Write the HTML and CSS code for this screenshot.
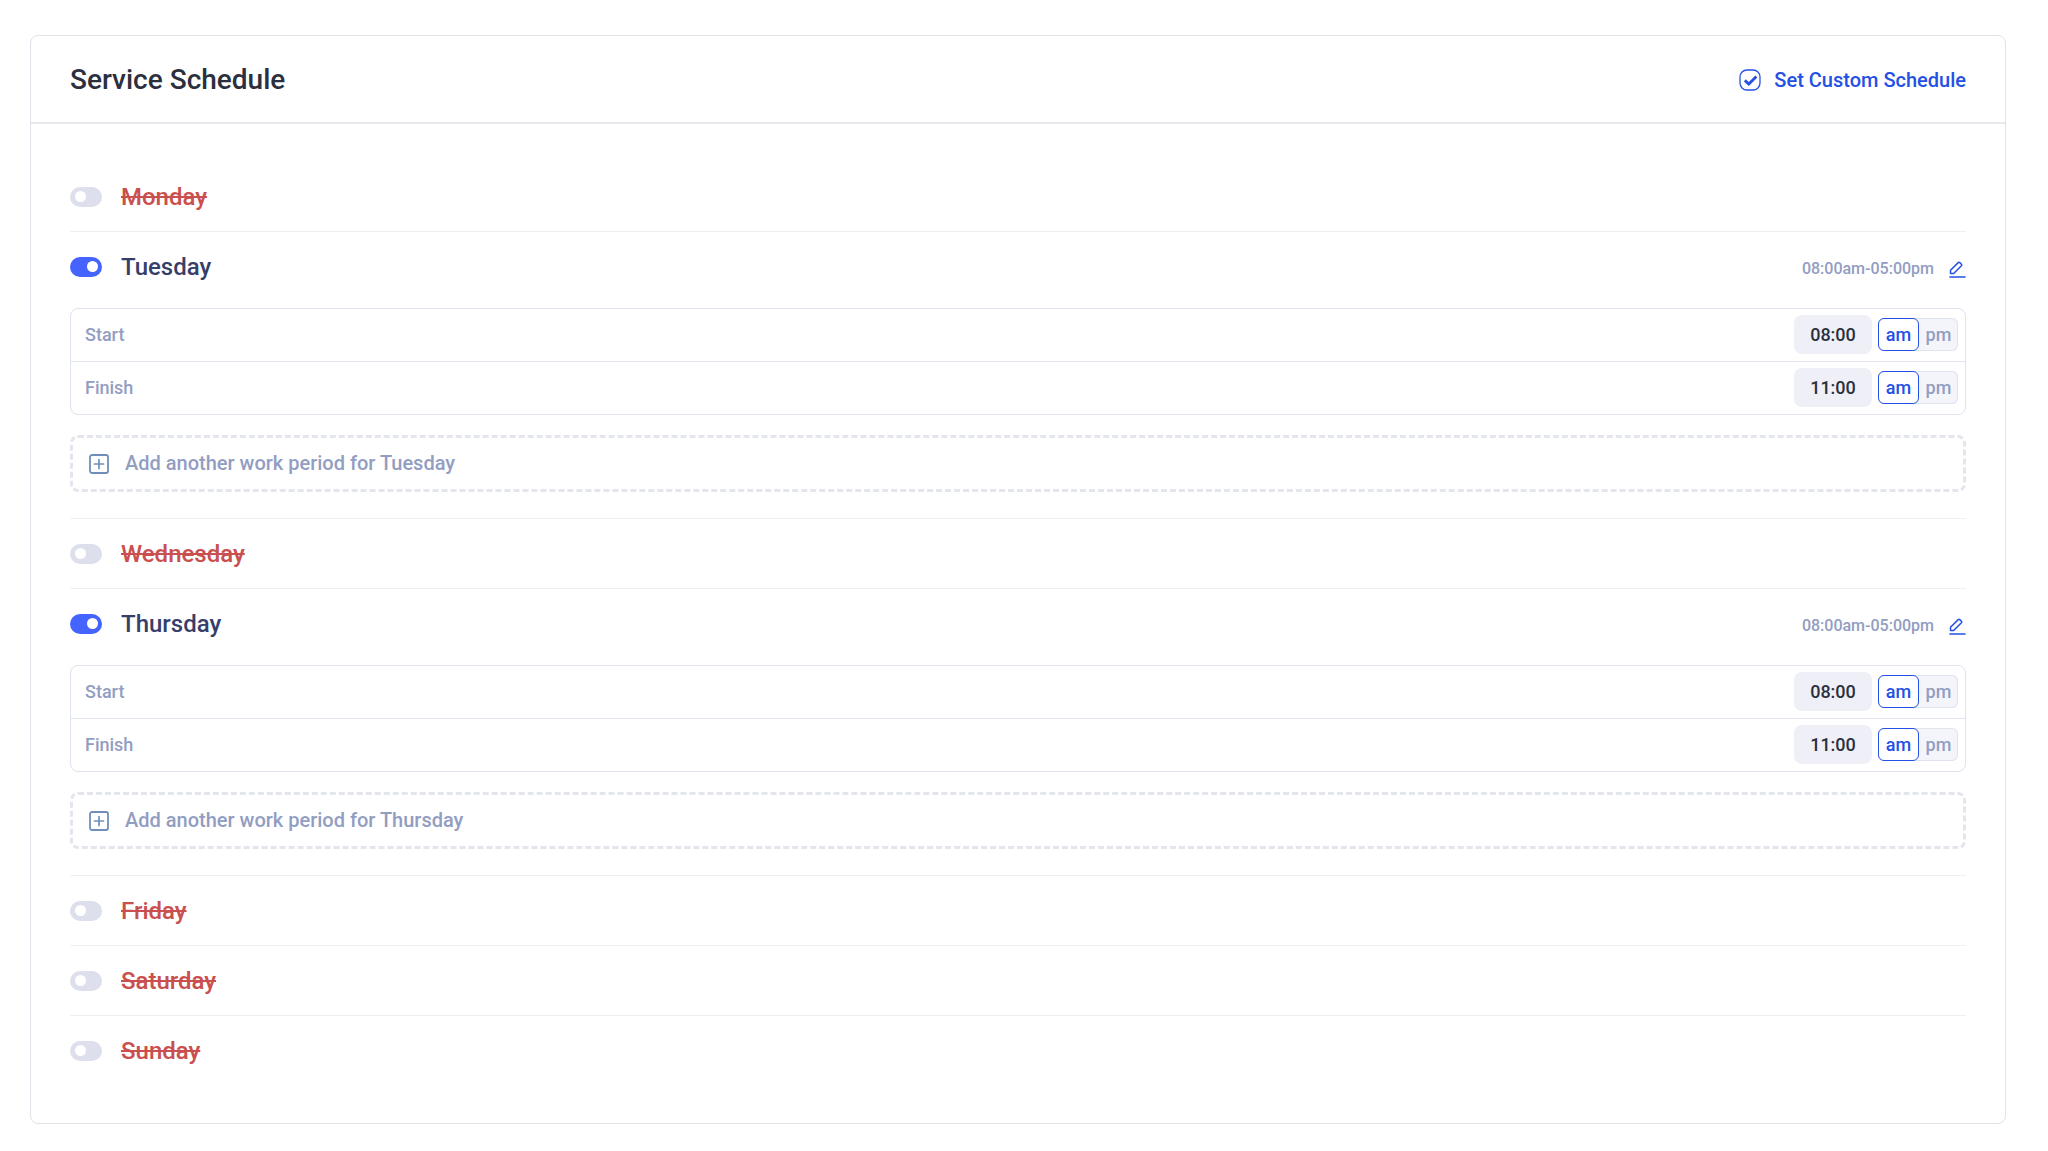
FILE: index.html
```html
<!DOCTYPE html>
<html lang="en">

<head>
    <meta charset="UTF-8">
    <meta name="viewport" content="width=device-width, initial-scale=1.0">
    <title>Service Schedule</title>
    <link rel="stylesheet" href="styles.css">
</head>

<body>
    <!-- shared icons -->
    <svg class="sprite" aria-hidden="true">
        <symbol id="icon-edit" viewBox="0 0 17 17">
            <path d="M1.5 12.5V9.3L9.2 1.6Q10 .9 10.8 1.6L12.4 3.2Q13.1 4 12.4 4.8L4.7 12.5Z" fill="none" stroke="currentColor" stroke-width="1.5" stroke-linejoin="round" />
            <path d="M1 16h15" stroke="currentColor" stroke-width="1.6" stroke-linecap="round" />
        </symbol>
        <symbol id="icon-plus" viewBox="0 0 20 20">
            <rect x="1" y="1" width="18" height="18" rx="2" fill="none" stroke="currentColor" stroke-width="1.8" />
            <path d="M5.5 10h9M10 5.5v9" stroke="currentColor" stroke-width="1.7" stroke-linecap="round" />
        </symbol>
    </svg>

    <section class="card">
        <header class="card_header">
            <h1>Service Schedule</h1>
            <button type="button" class="custom_btn">
                <svg width="22" height="22" viewBox="0 0 22 22" aria-hidden="true">
                    <rect x="1" y="1" width="20" height="20" rx="7" fill="none" stroke="currentColor" stroke-width="1.3" />
                    <path d="M5.8 11.4l4 3.6 7.6-7.6" fill="none" stroke="currentColor" stroke-width="2.8" />
                </svg>
                <span>Set Custom Schedule</span>
            </button>
        </header>

        <ul class="days">
            <li class="day">
                <div class="day_head">
                    <input type="checkbox" class="switch" id="monday">
                    <label for="monday">Monday</label>
                </div>
            </li>
            <li class="day">
                <div class="day_head">
                    <input type="checkbox" class="switch" id="tuesday" checked>
                    <label for="tuesday">Tuesday</label>
                    <div class="summary">
                        <span>08:00am-05:00pm</span>
                        <button type="button" aria-label="Edit Tuesday"><svg width="17" height="17"><use href="#icon-edit" /></svg></button>
                    </div>
                </div>
                <div class="period">
                    <div class="period_row">
                        <label for="tue_start">Start</label>
                        <input type="text" class="time" id="tue_start" value="08:00">
                        <div class="ampm">
                            <label><input type="radio" name="tue_start_ap" checked><span>am</span></label>
                            <label><input type="radio" name="tue_start_ap"><span>pm</span></label>
                        </div>
                    </div>
                    <div class="period_row">
                        <label for="tue_finish">Finish</label>
                        <input type="text" class="time" id="tue_finish" value="11:00">
                        <div class="ampm">
                            <label><input type="radio" name="tue_finish_ap" checked><span>am</span></label>
                            <label><input type="radio" name="tue_finish_ap"><span>pm</span></label>
                        </div>
                    </div>
                </div>
                <button type="button" class="add_btn">
                    <svg width="20" height="20" aria-hidden="true"><use href="#icon-plus" /></svg>
                    <span>Add another work period for Tuesday</span>
                </button>
            </li>
            <li class="day">
                <div class="day_head">
                    <input type="checkbox" class="switch" id="wednesday">
                    <label for="wednesday">Wednesday</label>
                </div>
            </li>
            <li class="day">
                <div class="day_head">
                    <input type="checkbox" class="switch" id="thursday" checked>
                    <label for="thursday">Thursday</label>
                    <div class="summary">
                        <span>08:00am-05:00pm</span>
                        <button type="button" aria-label="Edit Thursday"><svg width="17" height="17"><use href="#icon-edit" /></svg></button>
                    </div>
                </div>
                <div class="period">
                    <div class="period_row">
                        <label for="thu_start">Start</label>
                        <input type="text" class="time" id="thu_start" value="08:00">
                        <div class="ampm">
                            <label><input type="radio" name="thu_start_ap" checked><span>am</span></label>
                            <label><input type="radio" name="thu_start_ap"><span>pm</span></label>
                        </div>
                    </div>
                    <div class="period_row">
                        <label for="thu_finish">Finish</label>
                        <input type="text" class="time" id="thu_finish" value="11:00">
                        <div class="ampm">
                            <label><input type="radio" name="thu_finish_ap" checked><span>am</span></label>
                            <label><input type="radio" name="thu_finish_ap"><span>pm</span></label>
                        </div>
                    </div>
                </div>
                <button type="button" class="add_btn">
                    <svg width="20" height="20" aria-hidden="true"><use href="#icon-plus" /></svg>
                    <span>Add another work period for Thursday</span>
                </button>
            </li>
            <li class="day">
                <div class="day_head">
                    <input type="checkbox" class="switch" id="friday">
                    <label for="friday">Friday</label>
                </div>
            </li>
            <li class="day">
                <div class="day_head">
                    <input type="checkbox" class="switch" id="saturday">
                    <label for="saturday">Saturday</label>
                </div>
            </li>
            <li class="day">
                <div class="day_head">
                    <input type="checkbox" class="switch" id="sunday">
                    <label for="sunday">Sunday</label>
                </div>
            </li>
        </ul>
    </section>
</body>

</html>
```
FILE: styles.css
```css
* {
    margin: 0;
    padding: 0;
    box-sizing: border-box;
}

body {
    padding: 35px 42px 24px 30px;
    background: #fff;
    color: #2b2f3e;
    font-family: Roboto, "Liberation Sans", sans-serif;
    font-weight: 500;
}

li {
    list-style: none;
}

button,
input {
    font: inherit;
    color: inherit;
    border: none;
    background: none;
}

button,
label {
    cursor: pointer;
}

svg {
    display: block;
    flex: none;
}

.sprite {
    position: absolute;
    width: 0;
    height: 0;
}

.card {
    border: 1px solid #e1e2ea;
    border-radius: 8px;
}

.card_header {
    display: flex;
    align-items: center;
    justify-content: space-between;
    padding: 27px 39px 25px;
    border-bottom: 2px solid #e8e8ee;
}

.card_header h1 {
    font-size: 28px;
    line-height: 34px;
    font-weight: 500;
}

.custom_btn {
    display: flex;
    align-items: center;
    gap: 13px;
    color: #2450e6;
    font-size: 20px;
}

.days {
    padding: 38px 39px;
}

.day {
    border-bottom: 1px solid #eeeff3;
}

.day:last-child {
    border-bottom: none;
}

.day_head {
    display: flex;
    align-items: center;
    min-height: 69px;
    gap: 19px;
    font-size: 24px;
}

.switch {
    appearance: none;
    display: flex;
    align-items: center;
    flex: none;
    width: 32px;
    height: 20px;
    padding: 0 5px;
    border-radius: 10px;
    background: #dde0ec;
    cursor: pointer;
}

.switch::before {
    content: "";
    width: 11px;
    height: 11px;
    border-radius: 50%;
    background: #fff;
}

.switch:checked {
    justify-content: flex-end;
    padding: 0 4px;
    background: #4463ff;
}

.switch + label {
    color: #c9504f;
    text-decoration: line-through;
}

.switch:checked + label {
    color: #363f6b;
    text-decoration: none;
}

.summary {
    display: flex;
    align-items: center;
    gap: 15px;
    margin-left: auto;
    padding-top: 4px;
    color: #929dc2;
    font-size: 16px;
}

.summary button {
    padding-top: 2px;
    color: #2450e6;
}

.period {
    margin-top: 7px;
    border: 1px solid #dfe3ee;
    border-radius: 8px;
}

.period_row {
    display: flex;
    align-items: center;
    padding: 6px 7px 7px 14px;
    color: #929dc2;
    font-size: 18px;
}

.period_row + .period_row {
    border-top: 1px solid #dfe3ee;
}

.time {
    width: 78px;
    height: 39px;
    margin-left: auto;
    border-radius: 8px;
    background: #efeff7;
    color: #2b2f3e;
    text-align: center;
}

.ampm {
    display: flex;
    margin-left: 6px;
    border-radius: 6px;
    background: #f4f5fa;
    box-shadow: inset 0 0 0 1px #dfe3ee;
}

.ampm input {
    appearance: none;
    position: absolute;
}

.ampm span {
    display: block;
    width: 39px;
    line-height: 31px;
    border: 1px solid transparent;
    border-radius: 6px;
    text-align: center;
}

.ampm input:checked + span {
    width: 41px;
    border-color: #2450e6;
    background: #fff;
    color: #2450e6;
}

.add_btn {
    display: flex;
    align-items: center;
    gap: 16px;
    width: 100%;
    margin: 20px 0 26px;
    padding: 14px 16px;
    border: 3px dashed #e3e6ed;
    border-radius: 8px;
    color: #929dc2;
    font-size: 20px;
    line-height: 23px;
}

.add_btn svg {
    color: #6f8fbb;
}
```
